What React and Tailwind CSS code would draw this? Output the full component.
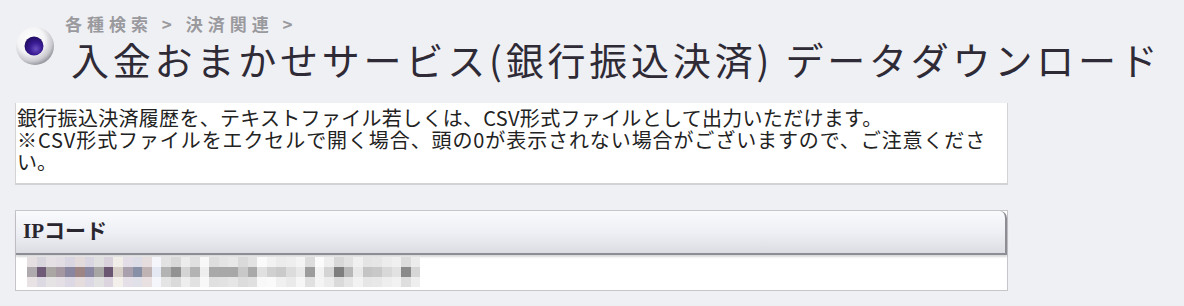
import React from "react";

const MID = [
  "#aeaaae", "#6f5a78", "#a9a6a4", "#a497a1", "#8a86a0", "#9c8584", "#8a87a2", "#a7a6a4",
  "#6b5672", "#d6cfc8", "#a9a0ad", "#8890a8", "#c0b3b3", "#e3e8f2", "#b3b3b3", "#929292",
  "#d4d4d4", "#b3b3b3", "#eeeeee", "#a9a9a9", "#a8a8a8", "#a8a8a8", "#c8c8c8", "#a9a9a9",
  "#e0e0e0", "#d0d0d0", "#cacaca", "#dcdcdc", "#e8e8e8", "#9c9c9c", "#f2f2f2", "#d4d4d4",
  "#7e7e7e", "#b8b8b8", "#e8e8e8", "#c4c4c4", "#c8c8c8", "#d8d8d8", "#e2e2e2", "#8a8a8a",
  "#d6d6d6",
];
const TOP = [
  "#e6dfe2", "#d9d6de", "#e4e0e3", "#e2dde2", "#d9d6e2", "#e2dadb", "#d9d6e2", "#e0e0e0",
  "#d9d1db", "#f1ede8", "#e2dde6", "#dcdde6", "#e6dddf", "#f4f6fb", "#e2e2e2", "#d8d8d8",
  "#ececec", "#e0e0e0", "#f8f8f8", "#dedede", "#e4e4e4", "#e8e8e8", "#dadada", "#e2e2e2",
  "#fafafa", "#f2f2f2", "#ececec", "#eeeeee", "#f4f4f4", "#dcdcdc", "#fbfbfb", "#eeeeee",
  "#d8d8d8", "#e2e2e2", "#f0f0f0", "#e4e4e4", "#e6e6e6", "#ececec", "#f0f0f0", "#dcdcdc",
  "#ececec",
];
const BOT = [
  "#e8e2e4", "#ddd9e2", "#e6e3e5", "#e4dfe4", "#dcd9e4", "#e5dddd", "#dcd9e4", "#e2e2e2",
  "#dcd4de", "#f3efea", "#e5e0e8", "#dfe0e8", "#e8e0e1", "#f4f6fb", "#e4e4e4", "#dadada",
  "#eeeeee", "#e2e2e2", "#f8f8f8", "#e0e0e0", "#e2e2e2", "#e6e6e6", "#dcdcdc", "#e0e0e0",
  "#f8f8f8", "#fafafa", "#f0f0f0", "#eaeaea", "#f6f6f6", "#e0e0e0", "#f4f4f4", "#ececec",
  "#dadada", "#e6e6e6", "#f2f2f2", "#e6e6e6", "#e8e8e8", "#eeeeee", "#f2f2f2", "#dedede",
  "#eeeeee",
];

function Bullet() {
  return (
    <svg width="40" height="40" viewBox="0 0 40 40" className="shrink-0">
      <defs>
        <radialGradient id="shell" cx="40%" cy="35%" r="65%">
          <stop offset="0%" stopColor="#ffffff" />
          <stop offset="55%" stopColor="#f4f4f6" />
          <stop offset="85%" stopColor="#c9c9cf" />
          <stop offset="100%" stopColor="#9c9ca4" />
        </radialGradient>
        <radialGradient id="dot" cx="60%" cy="65%" r="70%">
          <stop offset="0%" stopColor="#6a4fc0" />
          <stop offset="45%" stopColor="#3a1b94" />
          <stop offset="100%" stopColor="#1c0a5a" />
        </radialGradient>
      </defs>
      <circle cx="20" cy="20" r="19" fill="url(#shell)" />
      <circle cx="19" cy="20" r="9.5" fill="url(#dot)" />
    </svg>
  );
}

function MosaicRow({ colors }) {
  return (
    <div className="flex h-[10px]">
      {colors.map((c, i) => (
        <div key={i} className="h-full w-[9.6px] shrink-0" style={{ backgroundColor: c }} />
      ))}
    </div>
  );
}

export default function App() {
  return (
    <div
      className="h-[306px] w-[1184px] overflow-hidden bg-[#eff0f4] text-[#2b2b33]"
      style={{ fontFamily: '"Noto Sans CJK JP", "Noto Sans", sans-serif' }}
    >
      <div className="flex items-start pl-[15px] pt-[14px]">
        <div className="mt-[12px]">
          <Bullet />
        </div>
        <div className="ml-[10px] flex flex-col">
          <div className="text-[17px] font-bold leading-[20px] tracking-[5px] text-[#9a9a9e]">
            各種検索 &gt; 決済関連 &gt;
          </div>
          <h1 className="ml-[6px] mt-[4px] whitespace-nowrap text-[38px] font-normal leading-[42px] tracking-[3.8px] text-[#2e2a36]">
            入金おまかせサービス(銀行振込決済) データダウンロード
          </h1>
        </div>
      </div>

      <div className="ml-[15px] mt-[23px] w-[993px] border-x border-b-2 border-[#d3d3d6] bg-white pb-[10px] pl-[1px] pt-[4px] text-[20px] leading-[22px] text-[#222]">
        <div className="whitespace-nowrap tracking-[0.3px]">
          銀行振込決済履歴を、テキストファイル若しくは、CSV形式ファイルとして出力いただけます。
        </div>
        <div className="whitespace-nowrap tracking-[0.9px]">
          ※CSV形式ファイルをエクセルで開く場合、頭の0が表示されない場合がございますので、ご注意くださ
        </div>
        <div>い。</div>
      </div>

      <div className="ml-[15px] mt-[25px] w-[993px] border border-[#c6c6ca] bg-white">
        <div className="flex h-[44px] items-center rounded-tr-[7px] border-b-2 border-r-2 border-[#8d8e95] bg-gradient-to-b from-[#f9fafc] via-[#eef0f5] to-[#dcdde3] pl-[7px] shadow-[0_2px_2px_rgba(0,0,0,0.15)]">
          <span
            className="text-[21px] font-bold text-[#2a2630]"
            style={{ fontFamily: '"Liberation Serif", "Noto Sans CJK JP", serif' }}
          >
            IPコード
          </span>
        </div>
        <div className="h-[35px] pl-[11px] pt-[2px]">
          <div className="flex flex-col">
            <MosaicRow colors={TOP} />
            <MosaicRow colors={MID} />
            <MosaicRow colors={BOT} />
          </div>
        </div>
      </div>
    </div>
  );
}
